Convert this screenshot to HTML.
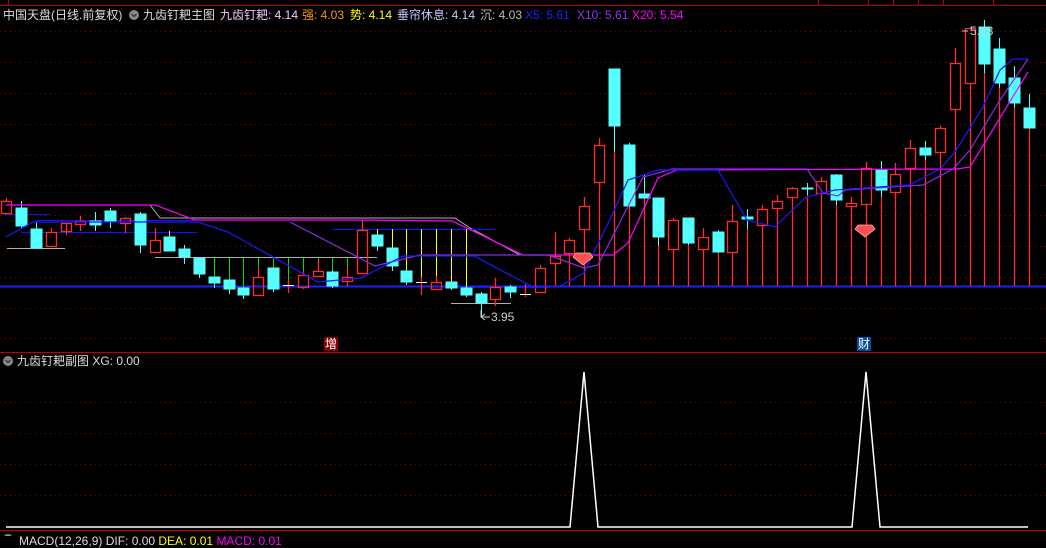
<!DOCTYPE html>
<html><head><meta charset="utf-8"><style>
html,body{margin:0;padding:0;background:#000;width:1046px;height:536px;overflow:hidden}
.t{position:absolute;font:12px "Liberation Sans","Noto Sans CJK SC",sans-serif;white-space:nowrap;line-height:14px}
</style></head><body>
<svg width="1046" height="536" style="position:absolute;left:0;top:0" xmlns="http://www.w3.org/2000/svg">
<g stroke="#800000" stroke-dasharray="1 4" stroke-width="1">
<line x1="0" y1="31.5" x2="1046" y2="31.5"/><line x1="0" y1="62.5" x2="1046" y2="62.5"/><line x1="0" y1="93.5" x2="1046" y2="93.5"/><line x1="0" y1="124.5" x2="1046" y2="124.5"/><line x1="0" y1="155.5" x2="1046" y2="155.5"/><line x1="0" y1="185.5" x2="1046" y2="185.5"/><line x1="0" y1="215.5" x2="1046" y2="215.5"/><line x1="0" y1="246.5" x2="1046" y2="246.5"/><line x1="0" y1="277.5" x2="1046" y2="277.5"/><line x1="0" y1="308.5" x2="1046" y2="308.5"/><line x1="0" y1="338.5" x2="1046" y2="338.5"/>
<line x1="0" y1="402.5" x2="1046" y2="402.5"/><line x1="0" y1="433.5" x2="1046" y2="433.5"/><line x1="0" y1="464.5" x2="1046" y2="464.5"/><line x1="0" y1="495.5" x2="1046" y2="495.5"/>
</g>
<line x1="0" y1="5.5" x2="1046" y2="5.5" stroke="#b00000"/>
<line x1="8.5" y1="0" x2="8.5" y2="5" stroke="#b00000"/>
<g stroke="#b00000"><line x1="818.5" y1="0" x2="818.5" y2="5"/><line x1="868.5" y1="0" x2="868.5" y2="5"/><line x1="893.5" y1="0" x2="893.5" y2="5"/><line x1="918.5" y1="0" x2="918.5" y2="5"/><line x1="943.5" y1="0" x2="943.5" y2="5"/><line x1="993.5" y1="0" x2="993.5" y2="5"/></g>
<line x1="0" y1="352.5" x2="1046" y2="352.5" stroke="#c00000"/>
<line x1="0" y1="530.5" x2="1046" y2="530.5" stroke="#c00000"/>
<line x1="0" y1="286.5" x2="1046" y2="286.5" stroke="#2020ff" stroke-width="2"/>
<g stroke="#b0b0b0" fill="none"><line x1="7" y1="248.5" x2="65" y2="248.5"/><line x1="155" y1="257.5" x2="377" y2="257.5"/><line x1="451" y1="303.5" x2="511" y2="303.5"/>
<polyline points="10,205 150,205 160,218 455,218 470,228 520,255 540,255"/></g>
<g stroke="#1010ff" fill="none"><line x1="4" y1="214.5" x2="50" y2="214.5"/><line x1="35" y1="220.5" x2="195" y2="220.5"/><line x1="21" y1="232.5" x2="197" y2="232.5"/><line x1="332" y1="229.5" x2="495" y2="229.5"/><line x1="466" y1="287.5" x2="550" y2="287.5"/></g>
<g stroke="#00e000"><line x1="214.5" y1="257" x2="214.5" y2="277"/><line x1="229.5" y1="257" x2="229.5" y2="280"/><line x1="243.5" y1="257" x2="243.5" y2="288"/><line x1="258.5" y1="257" x2="258.5" y2="267"/><line x1="273.5" y1="257" x2="273.5" y2="268"/><line x1="288.5" y1="257" x2="288.5" y2="280"/><line x1="303.5" y1="257" x2="303.5" y2="271"/><line x1="318.5" y1="257" x2="318.5" y2="260"/><line x1="332.5" y1="257" x2="332.5" y2="270"/><line x1="347.5" y1="257" x2="347.5" y2="268"/></g>
<g stroke="#ffff00"><line x1="169.5" y1="231" x2="169.5" y2="240"/><line x1="377.5" y1="229" x2="377.5" y2="240"/><line x1="392.5" y1="229" x2="392.5" y2="248"/><line x1="406.5" y1="229" x2="406.5" y2="271"/><line x1="421.5" y1="229" x2="421.5" y2="277"/><line x1="436.5" y1="229" x2="436.5" y2="276"/><line x1="451.5" y1="229" x2="451.5" y2="282"/><line x1="466.5" y1="229" x2="466.5" y2="288"/></g>
<g stroke="#ff2a2a" fill="none" stroke-width="1.3">
<path d="M6.5 198V201"/><rect x="1.5" y="201.5" width="10" height="12"/>
<path d="M51.5 228V232"/><rect x="46.5" y="232.5" width="10" height="14"/>
<path d="M66.5 223V235"/><rect x="61.5" y="223.5" width="10" height="8"/>
<path d="M80.5 216V221M80.5 224V231"/><rect x="75.5" y="221.5" width="10" height="3"/>
<path d="M125.5 217V218M125.5 223V233"/><rect x="120.5" y="218.5" width="10" height="5"/>
<path d="M155.5 228V240"/><rect x="150.5" y="240.5" width="10" height="12"/>
<path d="M258.5 267V277"/><rect x="253.5" y="277.5" width="10" height="18"/>
<path d="M303.5 271V275M303.5 287V289"/><rect x="298.5" y="275.5" width="10" height="12"/>
<path d="M318.5 260V271M318.5 276V277"/><rect x="313.5" y="271.5" width="10" height="5"/>
<path d="M347.5 268V277M347.5 281V286"/><rect x="342.5" y="277.5" width="10" height="4"/>
<path d="M362.5 220V230"/><rect x="357.5" y="230.5" width="10" height="43"/>
<path d="M436.5 276V282"/><rect x="431.5" y="282.5" width="10" height="7"/>
<path d="M495.5 278V287M495.5 299V306"/><rect x="490.5" y="287.5" width="10" height="12"/>
<path d="M540.5 265V268"/><rect x="535.5" y="268.5" width="10" height="24"/>
<path d="M555.5 232V256M555.5 263V286"/><rect x="550.5" y="256.5" width="10" height="7"/>
<path d="M569.5 238V240M569.5 253V286"/><rect x="564.5" y="240.5" width="10" height="13"/>
<path d="M584.5 197V206M584.5 229V286"/><rect x="579.5" y="206.5" width="10" height="23"/>
<path d="M599.5 138V145M599.5 182V286"/><rect x="594.5" y="145.5" width="10" height="37"/>
<path d="M673.5 218V220M673.5 249V286"/><rect x="668.5" y="220.5" width="10" height="29"/>
<path d="M703.5 228V237M703.5 249V286"/><rect x="698.5" y="237.5" width="10" height="12"/>
<path d="M732.5 205V221M732.5 252V286"/><rect x="727.5" y="221.5" width="10" height="31"/>
<path d="M762.5 205V209M762.5 225V286"/><rect x="757.5" y="209.5" width="10" height="16"/>
<path d="M777.5 195V201M777.5 208V286"/><rect x="772.5" y="201.5" width="10" height="7"/>
<path d="M792.5 187V188M792.5 197V286"/><rect x="787.5" y="188.5" width="10" height="9"/>
<path d="M821.5 177V181M821.5 193V286"/><rect x="816.5" y="181.5" width="10" height="12"/>
<path d="M851.5 197V203M851.5 206V286"/><rect x="846.5" y="203.5" width="10" height="3"/>
<path d="M866.5 162V168M866.5 204V286"/><rect x="861.5" y="168.5" width="10" height="36"/>
<path d="M895.5 163V174M895.5 192V286"/><rect x="890.5" y="174.5" width="10" height="18"/>
<path d="M910.5 140V148M910.5 168V286"/><rect x="905.5" y="148.5" width="10" height="20"/>
<path d="M940.5 126V128M940.5 152V286"/><rect x="935.5" y="128.5" width="10" height="24"/>
<path d="M955.5 48V63M955.5 109V286"/><rect x="950.5" y="63.5" width="10" height="46"/>
<path d="M970.5 27V28M970.5 83V286"/><rect x="965.5" y="28.5" width="10" height="55"/>
<path d="M614.5 152V286M629.5 206V286M644.5 198V286M658.5 246V286M688.5 245V286M718.5 253V286M747.5 229V286M807.5 195V286M836.5 205V286M881.5 197V286M925.5 160V286M984.5 73V286M999.5 88V286M1014.5 108V286M1029.5 128V286"/>
<path d="M288.5 280V293M421.5 277V295M525.5 284V297"/>
</g>
<g stroke="#fff"><line x1="283" y1="285.5" x2="294" y2="285.5"/><line x1="416" y1="282.5" x2="427" y2="282.5"/><line x1="520" y1="294.5" x2="531" y2="294.5"/></g>
<g stroke="#55ffff" fill="#55ffff">
<path d="M21.5 201V229M36.5 222V248M95.5 212V231M110.5 208V228M140.5 212V253M169.5 235V251M184.5 245V264M199.5 258V278M214.5 277V288M229.5 280V294M243.5 288V299M273.5 268V292M332.5 270V288M377.5 235V251M392.5 248V271M406.5 271V285M451.5 282V290M466.5 288V297M481.5 292V317M510.5 285V298M614.5 69V152M629.5 143V206M644.5 175V198M658.5 198V246M688.5 218V245M718.5 230V253M747.5 209V229M807.5 183V195M836.5 174V205M881.5 161V197M925.5 141V160M984.5 20V73M999.5 38V88M1014.5 66V108M1029.5 94V128" fill="none"/>
<rect x="16" y="208" width="11" height="18"/><rect x="31" y="229" width="11" height="19"/><rect x="90" y="221" width="11" height="4"/><rect x="105" y="211" width="11" height="11"/><rect x="135" y="214" width="11" height="31"/><rect x="164" y="237" width="11" height="14"/><rect x="179" y="249" width="11" height="8"/><rect x="194" y="258" width="11" height="16"/><rect x="209" y="277" width="11" height="6"/><rect x="224" y="280" width="11" height="9"/><rect x="238" y="288" width="11" height="7"/><rect x="268" y="268" width="11" height="21"/><rect x="327" y="272" width="11" height="14"/><rect x="372" y="235" width="11" height="11"/><rect x="387" y="248" width="11" height="18"/><rect x="401" y="271" width="11" height="11"/><rect x="446" y="282" width="11" height="6"/><rect x="461" y="288" width="11" height="7"/><rect x="476" y="294" width="11" height="9"/><rect x="505" y="287" width="11" height="5"/>
<rect x="609" y="69" width="11" height="57"/><rect x="624" y="145" width="11" height="61"/><rect x="639" y="194" width="11" height="4"/><rect x="653" y="198" width="11" height="39"/><rect x="683" y="218" width="11" height="25"/><rect x="713" y="232" width="11" height="20"/><rect x="742" y="217" width="11" height="2"/><rect x="802" y="188" width="11" height="1"/><rect x="831" y="175" width="11" height="25"/><rect x="876" y="170" width="11" height="20"/><rect x="920" y="148" width="11" height="7"/><rect x="979" y="27" width="11" height="37"/><rect x="994" y="49" width="11" height="34"/><rect x="1009" y="78" width="11" height="25"/><rect x="1024" y="108" width="11" height="20"/>
</g>
<polyline fill="none" stroke="#ff00ff" stroke-width="1.2" points="6,205 155,205 195,220 355,220 452,221 523,255 613,255 628,243 658,178 677,170 957,169 970,167 1028,72"/>
<polyline fill="none" stroke="#8a2be2" stroke-width="1.2" points="290,222 375,266 420,255 548,255 584,268 598,265 643,177 672,169 807,169 823,193 838,196 845,190 923,185 953,169 970,150 1000,100 1028,59"/>
<polyline fill="none" stroke="#1a1aff" stroke-width="1.2" points="6,237 33,222 198,222 228,232 318,282 361,278 403,256 474,256 533,287 560,286 584,273 613,213 628,180 643,175 658,170 718,170 747,220 775,227 806,197 835,190 909,185 940,169 955,152 983,107 1000,70 1013,59 1028,59"/>
<g fill="#ff5050" stroke="#ffb0b0" stroke-width="0.8"><path d="M576 253h14l3 4-10 8-10-8z"/><path d="M858 225h14l3 4-10 8-10-8z"/></g>
<polyline fill="none" stroke="#fff" stroke-width="1.5" points="6,527 570,527 584,372 598,527 852,527 866,372 880,527 1028,527"/>
<path d="M481 310V317H490M481 317l4-3M481 317l4 3" stroke="#ccc" fill="none"/>
<path d="M968 31h-6" stroke="#ccc"/>
<rect x="324" y="337" width="14" height="14" fill="#8b0000"/>
<rect x="857" y="337" width="14" height="14" fill="#0050a0"/>
<circle cx="134" cy="15" r="5" fill="#888"/><path d="M131.5 14l2.5 2.5 2.5-2.5" stroke="#222" fill="none"/>
<circle cx="8" cy="361" r="5" fill="#888"/><path d="M5.5 360l2.5 2.5 2.5-2.5" stroke="#222" fill="none"/>
<circle cx="8" cy="539" r="5" fill="#888"/>
</svg>
<div class="t" style="left:3px;top:8px;color:#ddd">中国天盘(日线.前复权)</div>
<div class="t" style="left:143px;top:8px;color:#ddd">九齿钉耙主图</div>
<div class="t" style="left:220px;top:8px;color:#f0c8ff">九齿钉耙: 4.14</div>
<div class="t" style="left:302px;top:8px;color:#ff9900">强: 4.03</div>
<div class="t" style="left:350px;top:8px;color:#ffff00">势: 4.14</div>
<div class="t" style="left:397px;top:8px;color:#c8c8ff">垂帘休息: 4.14</div>
<div class="t" style="left:480px;top:8px;color:#bbb">沉: 4.03</div>
<div class="t" style="left:525px;top:8px;color:#2020ff">X5: 5.61</div>
<div class="t" style="left:577px;top:8px;color:#9a30ff">X10: 5.61</div>
<div class="t" style="left:632px;top:8px;color:#ff00ff">X20: 5.54</div>
<div class="t" style="left:491px;top:310px;color:#ccc">3.95</div>
<div class="t" style="left:970px;top:24px;color:#ccc">5.83</div>
<div class="t" style="left:325px;top:337px;color:#fff">增</div>
<div class="t" style="left:858px;top:337px;color:#fff">财</div>
<div class="t" style="left:17px;top:354px;color:#ddd">九齿钉耙副图 XG: 0.00</div>
<div class="t" style="left:19px;top:534px;color:#ddd">MACD(12,26,9) DIF: 0.00 <span style="color:#ff0">DEA: 0.01</span> <span style="color:#f0f">MACD: 0.01</span></div>
</body></html>
